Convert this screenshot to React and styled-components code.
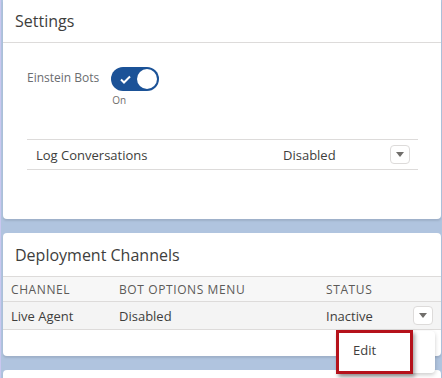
import React from 'react';
import styled, { createGlobalStyle } from 'styled-components';

const GlobalStyle = createGlobalStyle`
  html, body {
    margin: 0;
    padding: 0;
    background: #b0c4df;
    font-family: 'Open Sans', 'Liberation Sans', sans-serif;
    color: #3e3e3c;
    overflow: hidden;
  }
`;

const Page = styled.div`
  width: 442px;
  height: 378px;
  padding: 0 1px 0 2px;
  box-sizing: border-box;
  display: flex;
  flex-direction: column;
  gap: 14px;
  border-left: 1px solid #c9c7f0;
`;

const Card = styled.section`
  background: #fff;
  border-radius: ${p => (p.$top ? '0 0 4px 4px' : '4px')};
  box-shadow: 0 2px 2px rgba(0, 0, 0, 0.1);
  position: relative;
  flex-shrink: 0;
  min-height: ${p => p.$min || 0}px;
  box-sizing: border-box;
`;

const CardHeader = styled.h2`
  margin: 0;
  height: ${p => p.$h || 43}px;
  display: flex;
  align-items: center;
  padding-left: 12px;
  font-size: 16px;
  font-weight: 400;
  color: #3e3e3c;
  border-bottom: 1px solid #dddbda;
  box-sizing: border-box;
`;

const SettingsBody = styled.div`
  padding: 24px 23px 49px 24px;
`;

const ToggleRow = styled.div`
  display: flex;
  align-items: flex-start;
  gap: 12px;
`;

const FieldLabel = styled.span`
  font-size: 12px;
  color: #6b6d70;
  line-height: 18px;
  padding-top: 2px;
`;

const ToggleWrap = styled.div`
  display: flex;
  flex-direction: column;
  gap: 2px;
`;

const Toggle = styled.div`
  width: 48px;
  height: 24px;
  border-radius: 12px;
  background: #1b5297;
  display: flex;
  align-items: center;
  justify-content: space-between;
  padding: 0 2px 0 9px;
  box-sizing: border-box;
`;

const Knob = styled.span`
  width: 20px;
  height: 20px;
  border-radius: 50%;
  background: #fff;
`;

const ToggleText = styled.span`
  font-size: 10px;
  color: #706e6b;
  padding-left: 1px;
`;

const FieldRow = styled.div`
  margin-top: 32px;
  height: 31px;
  border-top: 1px solid #dddbda;
  border-bottom: 1px solid #dddbda;
  display: grid;
  grid-template-columns: 247px 1fr 28px;
  align-items: center;
  padding-left: 9px;
  font-size: 13px;
  color: #3e3e3c;
  box-sizing: border-box;
`;

const MenuButton = styled.button`
  width: 20px;
  height: 19px;
  padding: 0;
  border: 1px solid #dddbda;
  border-radius: 4px;
  background: #fff;
  display: flex;
  align-items: center;
  justify-content: center;
`;

const Caret = () => (
  <svg width="8" height="5" viewBox="0 0 8 5">
    <path d="M0 0h8L4 5z" fill="#706e6b" />
  </svg>
);

const Table = styled.div`
  padding-bottom: 26px;
`;

const TableRow = styled.div`
  display: grid;
  grid-template-columns: 108px 207px 1fr 28px;
  align-items: center;
  height: ${p => (p.$head ? 25 : 28)}px;
  box-sizing: border-box;
  padding-left: 8px;
  background: ${p => (p.$head ? '#f7f7f7' : '#f4f4f4')};
  border-bottom: 1px solid #dddbda;
  font-size: ${p => (p.$head ? '12px' : '13px')};
  letter-spacing: ${p => (p.$head ? '0.6px' : '0')};
  color: ${p => (p.$head ? '#5c5a58' : '#3e3e3c')};
  text-transform: ${p => (p.$head ? 'uppercase' : 'none')};
`;

const Menu = styled.div`
  position: absolute;
  left: 336px;
  top: 98px;
  width: 96px;
  height: 42px;
  background: #fff;
  border-radius: 4px;
  box-shadow: 0 2px 4px rgba(0, 0, 0, 0.2);
  box-sizing: border-box;
  padding: 10px 0 0 14px;
  font-size: 13px;
  color: #3e3e3c;
  z-index: 2;
`;

const Highlight = styled.div`
  position: absolute;
  left: -3px;
  top: -1px;
  width: 71px;
  height: 38px;
  border: 3px solid #b5121b;
  box-shadow: 2px 3px 4px rgba(0, 0, 0, 0.35);
`;

export default function App() {
  return (
    <>
      <GlobalStyle />
      <Page>
        <Card $top>
          <CardHeader>Settings</CardHeader>
          <SettingsBody>
            <ToggleRow>
              <FieldLabel>Einstein Bots</FieldLabel>
              <ToggleWrap>
                <Toggle>
                  <svg width="11" height="9" viewBox="0 0 11 9">
                    <path d="M1 4.5l3 3L10 1.5" stroke="#fff" strokeWidth="2" fill="none" />
                  </svg>
                  <Knob />
                </Toggle>
                <ToggleText>On</ToggleText>
              </ToggleWrap>
            </ToggleRow>
            <FieldRow>
              <span>Log Conversations</span>
              <span>Disabled</span>
              <MenuButton><Caret /></MenuButton>
            </FieldRow>
          </SettingsBody>
        </Card>
        <Card>
          <CardHeader $h={44}>Deployment Channels</CardHeader>
          <Table>
            <TableRow $head>
              <span>Channel</span>
              <span>Bot Options Menu</span>
              <span>Status</span>
              <span />
            </TableRow>
            <TableRow>
              <span>Live Agent</span>
              <span>Disabled</span>
              <span>Inactive</span>
              <MenuButton><Caret /></MenuButton>
            </TableRow>
          </Table>
          <Menu>
            Edit
            <Highlight />
          </Menu>
        </Card>
        <Card $min={40} />
      </Page>
    </>
  );
}
